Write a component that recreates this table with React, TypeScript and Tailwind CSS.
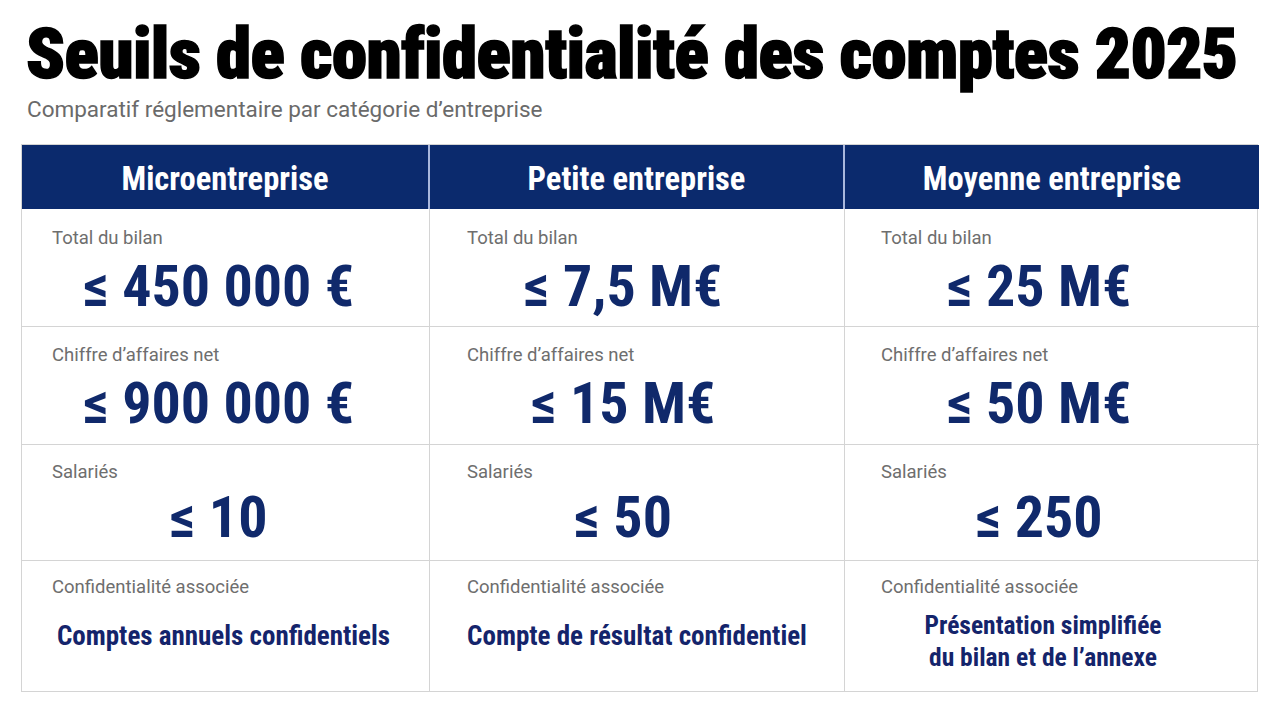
import React from "react";

type Column = {
  title: string;
  bilan: string;
  ca: string;
  salaries: string;
  confidentialite: string[];
  confSize: string;
};

const columns: Column[] = [
  {
    title: "Microentreprise",
    bilan: "≤ 450 000 €",
    ca: "≤ 900 000 €",
    salaries: "≤ 10",
    confidentialite: ["Comptes annuels confidentiels"],
    confSize: "text-[27px]",
  },
  {
    title: "Petite entreprise",
    bilan: "≤ 7,5 M€",
    ca: "≤ 15 M€",
    salaries: "≤ 50",
    confidentialite: ["Compte de résultat confidentiel"],
    confSize: "text-[27px]",
  },
  {
    title: "Moyenne entreprise",
    bilan: "≤ 25 M€",
    ca: "≤ 50 M€",
    salaries: "≤ 250",
    confidentialite: ["Présentation simplifiée", "du bilan et de l’annexe"],
    confSize: "text-[25.5px]",
  },
];

// décalages propres à chaque colonne
const borders = ["border-r border-[#d4d4d4]", "border-r border-[#d4d4d4]", ""];
const labelPad = ["pl-[30px]", "pl-[37px]", "pl-[36px]"];
const valuePad = ["pr-[14px]", "pr-[28px]", "pr-[26px]"];
const confPad = ["pr-[4px] pb-[14px]", "pr-0 pb-[14px]", "pr-[18px] pb-[4px]"];

const Label: React.FC<{ i: number; children: React.ReactNode }> = ({ i, children }) => (
  <div className={"font-['Roboto',sans-serif] text-[18.5px] leading-none text-[#6e6e6e] " + labelPad[i]}>
    {children}
  </div>
);

const Value: React.FC<{ i: number; mt?: string; children: React.ReactNode }> = ({ i, mt = "mt-[10px]", children }) => (
  <div
    className={
      "text-center font-['Roboto_Condensed',sans-serif] text-[58px] font-bold leading-none text-[#10296b] " +
      mt +
      " " +
      valuePad[i]
    }
  >
    {children}
  </div>
);

const App: React.FC = () => {
  return (
    <div className="min-h-screen w-[1280px] bg-white pl-[21px]">
      {/* titre */}
      <h1 className="pl-[5px] pt-[18px] font-['Roboto_Condensed',sans-serif] text-[71px] font-black leading-none tracking-[-0.6px] text-black [-webkit-text-stroke:1.5px_black]">
        Seuils de confidentialité des comptes 2025
      </h1>
      <p className="mt-[9px] pl-[6px] font-['Roboto',sans-serif] text-[22.5px] leading-none text-[#6a6a6a]">
        Comparatif réglementaire par catégorie d’entreprise
      </p>

      {/* tableau */}
      <div className="mt-[23px] grid w-[1237px] grid-cols-[408px_415px_414px] border border-[#d4d4d4]">
        {columns.map((c, i) => (
          <div
            key={c.title}
            className={
              "flex h-[64px] items-center justify-center bg-[#0b2a6d] pt-[6px] " +
              (i < 2 ? "border-r-2 border-[#a9b7dc]" : "")
            }
          >
            <span className="font-['Roboto_Condensed',sans-serif] text-[32.5px] font-bold leading-none text-white">
              {c.title}
            </span>
          </div>
        ))}

        {columns.map((c, i) => (
          <div key={"bilan" + i} className={"h-[118px] border-b border-[#d4d4d4] pt-[20px] " + borders[i]}>
            <Label i={i}>Total du bilan</Label>
            <Value i={i}>{c.bilan}</Value>
          </div>
        ))}

        {columns.map((c, i) => (
          <div key={"ca" + i} className={"h-[118px] border-b border-[#d4d4d4] pt-[19px] " + borders[i]}>
            <Label i={i}>Chiffre d’affaires net</Label>
            <Value i={i}>{c.ca}</Value>
          </div>
        ))}

        {columns.map((c, i) => (
          <div key={"sal" + i} className={"h-[116px] border-b border-[#d4d4d4] pt-[18px] " + borders[i]}>
            <Label i={i}>Salariés</Label>
            <Value i={i} mt="mt-[7px]">
              {c.salaries}
            </Value>
          </div>
        ))}

        {columns.map((c, i) => (
          <div key={"conf" + i} className={"flex h-[130px] flex-col pt-[17px] " + borders[i]}>
            <Label i={i}>Confidentialité associée</Label>
            <div className={"flex flex-1 items-center justify-center " + confPad[i]}>
              <div
                className={
                  "text-center font-['Roboto_Condensed',sans-serif] font-bold leading-[32px] text-[#14246b] " + c.confSize
                }
              >
                {c.confidentialite.map((l) => (
                  <div key={l}>{l}</div>
                ))}
              </div>
            </div>
          </div>
        ))}
      </div>
    </div>
  );
};

export default App;
